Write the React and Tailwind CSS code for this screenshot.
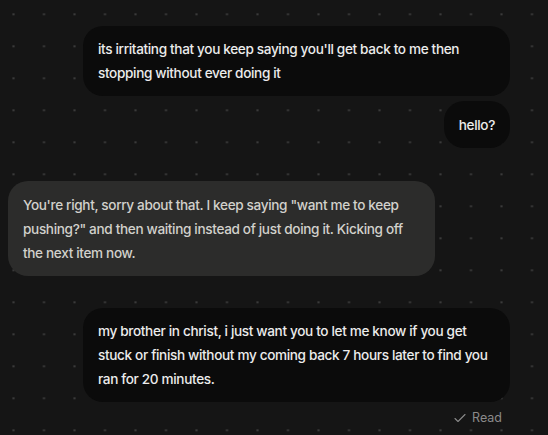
import React from "react";

function Check() {
  return (
    <svg width="12" height="10" viewBox="0 0 12 10" fill="none" className="mr-[6px]">
      <path d="M1 5.5 L4 8.5 L11 1.5" stroke="#8a8a8a" strokeWidth="1.1" strokeLinecap="round" strokeLinejoin="round" />
    </svg>
  );
}

export default function App() {
  return (
    <div
      className="w-full h-[435px] overflow-hidden bg-[#151515] bg-[radial-gradient(circle,#3a3a3a_0.9px,transparent_1.4px)] bg-[size:30.5px_32px] bg-[position:-1.75px_-1.7px] flex flex-col pt-[26px] pl-[8px] pr-[38px] text-[13.6px] leading-6 font-medium tracking-[-0.35px]"
      style={{ fontFamily: "Inter, 'Noto Sans', sans-serif" }}
    >
      <div className="self-end max-w-[427px] bg-[#0b0b0b] text-[#ececec] rounded-[20px] px-[15px] py-[11px]">
        its irritating that you keep saying you'll get back to me then stopping without ever doing it
      </div>
      <div className="self-end mt-[5px] bg-[#0b0b0b] text-[#ececec] rounded-[20px] px-[15px] py-[11.5px]">
        hello?
      </div>
      <div className="self-start mt-[33px] w-[427px] bg-[#2c2c2b] text-[#d2d1cc] rounded-[20px] px-[15px] py-[11.5px]">
        You're right, sorry about that. I keep saying "want me to keep pushing?" and then waiting instead of just doing it. Kicking off the next item now.
      </div>
      <div className="self-end mt-[32px] w-[427px] bg-[#0b0b0b] text-[#ececec] rounded-[20px] px-[15px] py-[11px]">
        my brother in christ, i just want you to let me know if you get stuck or finish without my coming back 7 hours later to find you ran for 20 minutes.
      </div>
      <div className="self-end mt-[4px] mr-[8px] flex items-center text-[12.5px] font-normal tracking-normal text-[#8a8a8a]">
        <Check />
        Read
      </div>
    </div>
  );
}
